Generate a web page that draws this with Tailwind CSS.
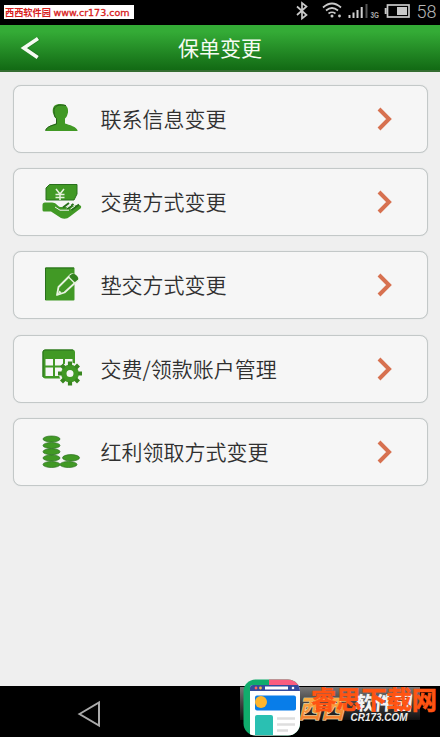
<!DOCTYPE html>
<html lang="zh-CN">
<head>
<meta charset="utf-8">
<title>保单变更</title>
<script src="https://cdn.jsdelivr.net/npm/@tailwindcss/browser@4"></script>
</head>
<body class="bg-[#efefef]">
<div class="relative flex h-[737px] w-[440px] flex-col overflow-hidden bg-[#efefef] font-['Noto_Sans_CJK_SC',sans-serif]">
  <!-- status bar -->
  <div class="flex h-[25px] shrink-0 justify-between bg-black">
    <div class="mt-[5px] ml-1 flex h-[14px] w-[130px] items-center bg-white pl-px text-[#d8201c]">
      <span class="w-[48px] text-[9.2px] leading-[14px] font-bold whitespace-nowrap">西西软件园</span>
      <svg class="block" width="80" height="14"><text x="0.500" y="10.500" font-family="DejaVu Sans" font-size="8.800" textLength="76" lengthAdjust="spacingAndGlyphs" fill="#d8201c" stroke="#d8201c" stroke-width=".3">www.cr173.com</text></svg>
    </div>
    <svg class="block" width="144" height="25" viewBox="296 0 144 25" fill="none">
      <path d="M297 6.500 306.500 15 302 18.500V3L306.500 6.500 297 15" stroke="#c9c9c9" stroke-width="1.700"/>
      <g stroke="#c9c9c9" stroke-width="1.700"><path d="M323 7.500Q332-.5 341 7.500"/><path d="M326 10.500Q332 5.500 338 10.500"/><path d="M328.500 13.500Q332 11 335.500 13.500"/></g>
      <circle cx="332" cy="16" r="1.500" fill="#c9c9c9"/><circle cx="339.500" cy="16" r="1.400" fill="#c9c9c9"/>
      <path d="M349.500 18V15M353.500 18V12.500M357.500 18V10M361.700 18V7" stroke="#d0d0d0" stroke-width="2"/>
      <path d="M366.500 18V4" stroke="#555" stroke-width="2"/>
      <text x="370.500" y="17.500" font-family="Liberation Sans" font-weight="bold" font-size="9.500" fill="#aaa" textLength="8.500" lengthAdjust="spacingAndGlyphs">3G</text>
      <rect x="387.500" y="5" width="21.500" height="12" stroke="#c9c9c9" stroke-width="1.700"/>
      <path d="M385.700 8v6" stroke="#c9c9c9" stroke-width="2"/><path d="M397 7h10v8H397z" fill="#c9c9c9"/>
      <text x="416.500" y="18" font-family="Roboto" font-weight="300" font-size="19" fill="#b5b5b5" textLength="20" lengthAdjust="spacingAndGlyphs">58</text>
    </svg>
  </div>
  <!-- title bar -->
  <div class="grid h-[47px] shrink-0 grid-cols-[78px_1fr_78px] items-center border-b-2 border-[#356d32] bg-linear-to-b from-[#34ab36] from-15% to-[#126a14]">
    <svg class="mt-[1px] ml-[20px] block" width="22" height="24" viewBox="20 36 22 24" fill="none"><path d="M38.800 38.500 24.500 48 38.300 57.500" stroke="#114f12" stroke-opacity=".4" stroke-width="4"/><path d="M38 38.500 23.800 48 37.700 57.500" stroke="#f6fbf3" stroke-width="3.600"/></svg>
    <h1 class="pb-px text-center text-[21px] leading-[40px] text-[#f6fbf3]">保单变更</h1>
  </div>
  <!-- menu -->
  <ul class="flex flex-1 flex-col gap-[15.2px] pt-[13px] pr-[12px] pl-[12.500px]">
    <li class="flex h-[68px] items-center rounded-[8px] border border-[#c3c8c8] bg-[#f6f6f6] shadow-[0_0_1px_#cbcfcf]">
      <svg class="ml-[16.500px] block shrink-0" width="70" height="60" viewBox="0 0 70 60"><path d="M15.500 42C16 37.500 22 36 26 34.500V29.500C23.500 27.500 23.700 25 22.800 23.500 22.300 17 25 15 30.500 15S38.500 18 38 23.500C37.400 25 37.500 27.500 35 29.500V34.500C39 36 47 37.500 47.700 42Z" fill="#419925"/><path d="M15.500 41.500C17 37 23 36.500 26.500 35V29.500C23.500 27.500 24 20 24 20 26 16 29 15.500 36 16.500" fill="none" stroke="#245d1a"/></svg>
      <span class="ml-[0.500px] flex-1 pb-[2px] text-[21px] leading-[30px] font-[350] text-[#303030]">联系信息变更</span>
      <svg class="mr-[34px] block" width="16" height="24" viewBox="0 0 16 24" fill="none"><path d="M2 2 12 12 2 22" stroke="#d77150" stroke-width="4"/></svg>
    </li>
    <li class="flex h-[68px] items-center rounded-[8px] border border-[#c3c8c8] bg-[#f6f6f6] shadow-[0_0_1px_#cbcfcf]">
      <svg class="ml-[16.500px] block shrink-0" width="70" height="60" viewBox="0 0 70 60"><path d="M19.500 12.500H47V22L44 28H16V16Z" fill="#419925" stroke="#28701c"/><path d="m26 17 4 5 4-5M30 22v6M25.500 22.500h9M25.500 25.500h9" fill="none" stroke="#e8f2df" stroke-width="1.500"/><path d="M12.500 33Q12.500 30.500 15 30.500H22C26 30.500 27 33.500 30 35H36L49 33Q52.500 34 50.500 36.500L40 44.500Q36 48 31 46L21 39.500H14Q12.500 39.500 12.500 38Z" fill="#419925"/><path d="M33 35.500 39 31M37 37 43.500 32M41.500 38 49 32.500" stroke="#286f1c" stroke-width="2"/><path d="m25 35 5 3.200H39M36.500 36 41 33M40.500 37 45 34" fill="none" stroke="#f6f6f6" stroke-width="1"/></svg>
      <span class="ml-[0.500px] flex-1 pb-[2px] text-[21px] leading-[30px] font-[350] text-[#303030]">交费方式变更</span>
      <svg class="mr-[34px] block" width="16" height="24" viewBox="0 0 16 24" fill="none"><path d="M2 2 12 12 2 22" stroke="#d77150" stroke-width="4"/></svg>
    </li>
    <li class="flex h-[68px] items-center rounded-[8px] border border-[#c3c8c8] bg-[#f6f6f6] shadow-[0_0_1px_#cbcfcf]">
      <svg class="ml-[16.500px] block shrink-0" width="70" height="60" viewBox="0 0 70 60"><rect x="15" y="12.500" width="29.500" height="33" rx="1" fill="#419925"/><path d="M15.500 45V13H44" fill="none" stroke="#286f1c"/><path d="m27 40 1.500-8L41 19.500Q43 18 47 22 49.500 25 47 26L34.500 37.500Z" fill="#419925" stroke="#e7f3df" stroke-width="1.800" stroke-linejoin="round"/><path d="m39 21 6 6 3-2.500q1-2-2-4.500-2.500-2-4-1Z" fill="#348120"/><path d="m38.500 22 6 6" stroke="#e7f3df" stroke-width="1.300"/><path d="m27.500 39.500 2-4 2 2Z" fill="#e7f3df"/></svg>
      <span class="ml-[0.500px] flex-1 pb-[2px] text-[21px] leading-[30px] font-[350] text-[#303030]">垫交方式变更</span>
      <svg class="mr-[34px] block" width="16" height="24" viewBox="0 0 16 24" fill="none"><path d="M2 2 12 12 2 22" stroke="#d77150" stroke-width="4"/></svg>
    </li>
    <li class="flex h-[68px] items-center rounded-[8px] border border-[#c3c8c8] bg-[#f6f6f6] shadow-[0_0_1px_#cbcfcf]">
      <svg class="ml-[16.500px] block shrink-0" width="70" height="60" viewBox="0 0 70 60"><rect x="12.500" y="10.500" width="32.500" height="29" rx="3" fill="#419925"/><path d="M13 38V13q0-2 2-2h28" fill="none" stroke="#286f1c"/><path d="M15.500 20H23v6.500h-7.500zM25 20h8v6.500h-8zM35 20h7.500v6.500H35zM15.500 28.500H23V37h-7.500zM25 28.500h8V37h-8z" fill="#f6f6f6"/><circle cx="40" cy="34.500" r="11" fill="#f6f6f6"/><circle cx="40" cy="34.500" r="6.200" fill="none" stroke="#419925" stroke-width="5.400"/><g stroke="#38861f" stroke-width="4.200"><path d="M40 22.500v4M40 42.500v4M28 34.500h4M48 34.500h4M31.500 26l3 3M45.500 40l3 3M48.500 26l-3 3M34.500 40l-3 3"/></g></svg>
      <span class="ml-[0.500px] flex-1 pb-[2px] text-[21px] leading-[30px] font-[350] text-[#303030]">交费/领款账户管理</span>
      <svg class="mr-[34px] block" width="16" height="24" viewBox="0 0 16 24" fill="none"><path d="M2 2 12 12 2 22" stroke="#d77150" stroke-width="4"/></svg>
    </li>
    <li class="flex h-[68px] items-center rounded-[8px] border border-[#c3c8c8] bg-[#f6f6f6] shadow-[0_0_1px_#cbcfcf]">
      <svg class="ml-[16.500px] block shrink-0" width="70" height="60" viewBox="0 0 70 60"><g fill="#419925" stroke="#286f1c" stroke-width=".7"><ellipse cx="21.500" cy="17" rx="8.500" ry="3"/><ellipse cx="21.500" cy="23.500" rx="8.500" ry="3"/><ellipse cx="21.500" cy="29.700" rx="8.500" ry="3"/><ellipse cx="21.500" cy="36" rx="8.500" ry="3"/><ellipse cx="21.500" cy="42.500" rx="8.500" ry="3"/><ellipse cx="41" cy="35.800" rx="8.500" ry="3.200"/><ellipse cx="38.500" cy="42.500" rx="8.500" ry="3"/></g></svg>
      <span class="ml-[0.500px] flex-1 pb-[2px] text-[21px] leading-[30px] font-[350] text-[#303030]">红利领取方式变更</span>
      <svg class="mr-[34px] block" width="16" height="24" viewBox="0 0 16 24" fill="none"><path d="M2 2 12 12 2 22" stroke="#d77150" stroke-width="4"/></svg>
    </li>
  </ul>
  <!-- navigation bar -->
  <div class="h-[51px] shrink-0 bg-black">
    <svg class="block" width="440" height="51" viewBox="0 686 440 51" fill="none"><path d="M79.500 714 99 702.500V725.500Z" stroke="#aaa" stroke-width="2"/></svg>
  </div>
  <!-- site badge over the bottom edge -->
  <svg class="absolute bottom-0 left-[230px]" width="210" height="67" viewBox="230 670 210 67">
    <defs>
      <linearGradient id="band" x2="0" y2="1"><stop stop-color="#777"/><stop offset=".45" stop-color="#454545"/><stop offset="1" stop-color="#101010"/></linearGradient>
      <linearGradient id="gold" x2="0" y2="1"><stop stop-color="#ffc34d"/><stop offset="1" stop-color="#ef6f28"/></linearGradient>
      <clipPath id="tile"><rect x="243.500" y="679.500" width="56.500" height="56" rx="12"/></clipPath>
    </defs>
    <rect x="240" y="687" width="180" height="33" fill="url(#band)"/>
    <g font-family="Noto Sans CJK SC" font-weight="900">
      <text transform="translate(298 718) skewX(-14)" font-size="25" fill="url(#gold)" stroke="#fff0c5" stroke-width=".5" textLength="46" lengthAdjust="spacingAndGlyphs">西西</text>
      <text transform="translate(355 710) skewX(-5)" font-size="19" fill="#f2f2f2" textLength="57" lengthAdjust="spacingAndGlyphs">软件园</text>
      <text x="311" y="709" font-weight="700" font-size="25.500" fill="#ff5412" stroke="#ff5412" stroke-width=".6" textLength="126" lengthAdjust="spacingAndGlyphs">睿思下载网</text>
    </g>
    <text x="350.500" y="720.500" font-family="Liberation Sans" font-style="italic" font-weight="bold" font-size="10.500" fill="#ededed" textLength="57" lengthAdjust="spacingAndGlyphs">CR173.COM</text>
    <g clip-path="url(#tile)">
      <path d="M243 679h58v58h-58z" fill="#10ac6c"/><path d="M269 679h32v12h-32z" fill="#fb5c7f"/>
      <path d="M250 688q0-3 3-3h48v52h-51z" fill="#fff"/><path d="M250 691v-3q0-3 3-3h48v6z" fill="#344b9d"/>
      <circle cx="256" cy="688" r="1.400" fill="#ff675d"/><circle cx="260.500" cy="688" r="1.400" fill="#ffba45"/><rect x="265" y="686.500" width="23" height="3" fill="#fff"/><circle cx="293" cy="688" r="1.300" fill="#fff"/>
      <rect x="255" y="695.500" width="41" height="15" rx="2" fill="#087de9"/><circle cx="261" cy="702" r="6" fill="#ffb52e"/>
      <path d="M255 735v-18q0-2 2-2h14q2 0 2 2v18z" fill="#2ac0b2"/>
      <path d="M277 718.500h18M277 724.500h18M277 730.500h11" stroke="#dedede" stroke-width="2.500"/>
    </g>
  </svg>
</div>
</body>
</html>
